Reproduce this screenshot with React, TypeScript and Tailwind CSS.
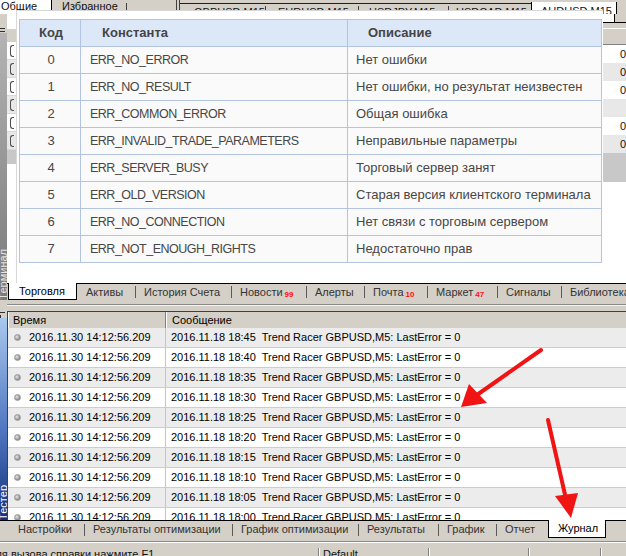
import React from "react";

const errorRows = [
  ["0", "ERR_NO_ERROR", "Нет ошибки"],
  ["1", "ERR_NO_RESULT", "Нет ошибки, но результат неизвестен"],
  ["2", "ERR_COMMON_ERROR", "Общая ошибка"],
  ["3", "ERR_INVALID_TRADE_PARAMETERS", "Неправильные параметры"],
  ["4", "ERR_SERVER_BUSY", "Торговый сервер занят"],
  ["5", "ERR_OLD_VERSION", "Старая версия клиентского терминала"],
  ["6", "ERR_NO_CONNECTION", "Нет связи с торговым сервером"],
  ["7", "ERR_NOT_ENOUGH_RIGHTS", "Недостаточно прав"],
  ["8", "ERR_TOO_FREQUENT_REQUESTS", "Слишком частые запросы"],
];

const journalTimes = ["18:45", "18:40", "18:35", "18:30", "18:25", "18:20", "18:15", "18:10", "18:05", "18:00"];

function Tab({ className, label, badge, sep = true }: { className: string; label: string; badge?: string; sep?: boolean }) {
  return (
    <div className={"flex items-center shrink-0 " + className}>
      <span className="flex-1 flex items-center whitespace-nowrap">
        {label}
        {badge && <span className="ml-[2px] self-end mb-[1px] text-[8px] leading-[8px] font-bold text-[#ff1010]">{badge}</span>}
      </span>
      {sep && <span className="w-px h-[12px] bg-[#5a5a5a] mr-[8px]" />}
    </div>
  );
}

function TopTabs() {
  return (
    <div className="flex h-[14px] shrink-0 leading-[13px] text-[#111]">
      <div className="w-[52px] bg-white border-r border-black pl-[1px]">Общие</div>
      <div className="flex w-[75px]">
        <span className="flex-1 pl-[10px]">Избранное</span>
        <span className="mt-[3px] h-[9px] w-px bg-[#404040]" />
      </div>
      <div className="w-[49px]" />
      <div className="w-px bg-[#404040]" />
      <div className="w-[2px]" />
      <div className="w-px bg-[#404040]" />
      <div className="flex w-[351px] border-t border-[#202020] mt-[3px] pt-[2px]">
        <div className="flex w-[85px]"><span className="flex-1 pl-[14px]">GBPUSD,M15</span><span className="h-[9px] w-px bg-[#404040]" /></div>
        <div className="flex w-[94px]"><span className="flex-1 pl-[13px]">EURUSD,M15</span><span className="h-[9px] w-px bg-[#404040]" /></div>
        <div className="flex w-[90px]"><span className="flex-1 pl-[10px]">USDJPY,M15</span><span className="h-[9px] w-px bg-[#404040]" /></div>
        <div className="flex-1 pl-[7px]">USDCAD,M15</div>
      </div>
      <div className="w-[86px] mt-[2px] bg-white border-l border-r border-black pl-[9px] pt-[3px]">AUDUSD,M15</div>
    </div>
  );
}

function SideBars() {
  return (
    <div className="flex flex-col w-[7px] shrink-0">
      <div className="h-[11px]" />
      <div className="h-[8px] flex flex-col gap-[2px] pt-[3px]">
        <div className="h-px w-[5px] bg-[#303030]" />
        <div className="h-px w-[5px] bg-[#303030]" />
      </div>
      <div className="h-[267px] flex flex-col justify-end overflow-hidden bg-[linear-gradient(180deg,#b4b4b4,#8a8a8a_70%,#7a7a7a)]">
        <span className="[writing-mode:vertical-rl] rotate-180 leading-[9px] text-[11px] text-[#e4e4e4] pb-[4px] -ml-[1px]">Терминал</span>
      </div>
      <div className="h-[10px]" />
      <div className="h-[8px] flex flex-col gap-[2px] pt-[2px]">
        <div className="h-px w-[5px] bg-[#303030]" />
        <div className="h-[3px] w-px bg-[#303030]" />
      </div>
      <div className="flex-1 flex flex-col justify-end overflow-hidden bg-[linear-gradient(180deg,#a9c8ee,#5077c0_55%,#12307a)]">
        <span className="[writing-mode:vertical-rl] rotate-180 leading-[9px] text-[11px] text-white pb-[2px] -ml-[1px]">Тестер</span>
      </div>
    </div>
  );
}

function LeftListRow({ grey }: { grey?: boolean }) {
  return (
    <div className={grey ? "h-[18px] bg-[#e8e8e8] border-b border-[#d8d8d8] flex items-center pl-[3px]" : "h-[18px] bg-white border-b border-[#d8d8d8] flex items-center pl-[3px]"}>
      <div className="w-[4px] h-[12px] border-l border-t border-b border-[#505050] rounded-l-[3px]" />
    </div>
  );
}

function RightListRow({ grey, value }: { grey?: boolean; value?: string }) {
  return (
    <div className={grey ? "h-[18px] bg-[#e8e8e8] flex items-center pl-[17px]" : "h-[18px] bg-white flex items-center pl-[17px]"}>
      {value}
    </div>
  );
}

function UpperArea() {
  return (
    <div className="flex h-[269px] bg-white">
      <div className="flex flex-col w-[9px]">
        <div className="h-[14px]" />
        <div className="h-[14px] bg-[#d4d0c8] border-t border-white" />
        <LeftListRow />
        <LeftListRow grey />
        <LeftListRow />
        <LeftListRow grey />
        <LeftListRow />
        <LeftListRow grey />
        <div className="h-[14px] bg-[#c8c8c8]" />
      </div>
      <div className="flex-1" />
      <div className="flex flex-col w-[23px] text-[#111]">
        <div className="flex h-[8px]">
          <div className="w-[11px] bg-white" />
          <div className="w-px bg-black" />
          <div className="flex-1 bg-[#d4d0c8]" />
        </div>
        <div className="h-[6px] bg-[#d4d0c8] border-t border-black" />
        <div className="h-[17px] bg-[#d4d0c8] border-t border-white border-b border-b-[#808080]" />
        <RightListRow value="0" />
        <RightListRow grey value="0" />
        <RightListRow value="0" />
        <RightListRow grey />
        <RightListRow value="0" />
        <RightListRow grey value="0" />
        <div className="h-[29px] bg-[#c8c8c8]" />
      </div>
    </div>
  );
}

function TerminalTabs() {
  return (
    <div className="flex h-[17px] text-[#333]">
      <div className="w-px border-t border-black" />
      <div className="w-[69px] bg-white border-l border-r border-b border-black pl-[10px] flex items-center text-black">Торговля</div>
      <div className="flex flex-1 border-t border-black pl-[9px] overflow-hidden">
        <Tab className="w-[58px]" label="Активы" />
        <Tab className="w-[96px]" label="История Счета" />
        <Tab className="w-[75px]" label="Новости" badge="99" />
        <Tab className="w-[58px]" label="Алерты" />
        <Tab className="w-[63px]" label="Почта" badge="10" />
        <Tab className="w-[70px]" label="Маркет" badge="47" />
        <Tab className="w-[64px]" label="Сигналы" />
        <Tab className="w-[70px]" label="Библиотека" sep={false} />
      </div>
    </div>
  );
}

function Journal() {
  return (
    <div className="flex flex-col h-[220px] text-black">
      <div className="h-[11px] flex flex-col">
        <div className="h-[4px]" />
        <div className="h-px bg-[#8a8a8a]" />
        <div className="h-px bg-[#f4f4f4]" />
      </div>
      <div className="flex flex-col flex-1 border-l border-[#404040] overflow-hidden">
        <div className="flex h-[17px] shrink-0 border-t border-[#404040] bg-[#d4d0c8]">
          <div className="w-[158px] border-r border-[#808080] border-l border-l-white pl-[4px] flex items-center">Время</div>
          <div className="flex-1 border-l border-white pl-[5px] flex items-center">Сообщение</div>
        </div>
        {journalTimes.map((t, i) => (
          <div key={t} className={i % 2 === 0 ? "flex h-[20px] shrink-0 bg-[#ececec] border-b border-[#cdcdcd]" : "flex h-[20px] shrink-0 bg-white border-b border-[#cdcdcd]"}>
            <div className="w-[158px] border-r border-[#c4c4c4] flex items-center pl-[6px]">
              <span className="w-[7px] h-[7px] rounded-full bg-[radial-gradient(circle_at_35%_35%,#e6e6e6,#8c8c8c_70%)] border border-[#9a9a9a]" />
              <span className="ml-[8px]">2016.11.30 14:12:56.209</span>
            </div>
            <div className="flex-1 flex items-center pl-[5px] whitespace-pre">{`2016.11.18 ${t}  Trend Racer GBPUSD,M5: LastError = 0`}</div>
          </div>
        ))}
      </div>
    </div>
  );
}

function TesterTabs() {
  return (
    <div className="flex h-[21px] shrink-0 text-[#333]">
      <div className="flex h-[18px] flex-1 border-t border-black pl-[18px]">
        <Tab className="w-[75px]" label="Настройки" />
        <Tab className="w-[148px]" label="Результаты оптимизации" />
        <Tab className="w-[126px]" label="График оптимизации" />
        <Tab className="w-[80px]" label="Результаты" />
        <Tab className="w-[58px]" label="График" />
        <Tab className="w-[43px]" label="Отчет" sep={false} />
      </div>
      <div className="w-[59px] h-[18px] bg-white border-l border-r border-b border-black pl-[9px] flex items-center text-black">Журнал</div>
      <div className="w-[20px] h-[18px] border-t border-black" />
    </div>
  );
}

function StatusBar() {
  return (
    <div className="flex h-[15px] shrink-0 border-t border-[#8a8a8a] overflow-hidden text-[#111]">
      <div className="flex flex-1 border-t border-white pt-[5px] leading-[13px]">
        <div className="w-[318px] overflow-hidden whitespace-nowrap"><span className="-ml-[12px] inline-block">Для вызова справки нажмите F1</span></div>
        <div className="w-px bg-[#808080]" />
        <div className="w-px bg-white" />
        <div className="w-[108px] pl-[3px]">Default</div>
        <div className="w-px bg-[#808080]" />
        <div className="w-px bg-white" />
        <div className="w-[98px]" />
        <div className="w-px bg-[#808080]" />
        <div className="w-px bg-white" />
        <div className="w-[70px]" />
        <div className="w-px bg-[#808080]" />
        <div className="w-px bg-white" />
      </div>
    </div>
  );
}

function ErrorPanel() {
  return (
    <div className="absolute left-[16px] top-[10px] w-[587px] h-[273px] bg-white border-l border-t border-[#d8d8d8] pl-[2px] pt-[8px] font-['Liberation_Sans',Arial,sans-serif] text-[13px] text-[#474747]">
      <div className="w-[583px] h-[244px] overflow-hidden border-l border-t border-[#b2c4df]">
        <div className="flex h-[27px] bg-[#dce8f7] border-b border-[#b2c4df] font-bold text-[13px] text-[#454545]">
          <div className="w-[61px] border-r border-[#b2c4df] flex items-center justify-center pl-[2px]">Код</div>
          <div className="w-[267px] border-r border-[#b2c4df] flex items-center pl-[21px]">Константа</div>
          <div className="w-[254px] border-r border-[#b2c4df] flex items-center pl-[20px]">Описание</div>
        </div>
        {errorRows.map(([code, name, desc]) => (
          <div key={code} className="flex h-[27px] bg-[#fafafa] border-b border-[#b2c4df]">
            <div className="w-[61px] border-r border-[#b2c4df] flex items-center justify-center pl-[2px]">{code}</div>
            <div className="w-[267px] border-r border-[#b2c4df] flex items-center pl-[9px] text-[12.5px] tracking-[-0.5px]">{name}</div>
            <div className="w-[254px] border-r border-[#b2c4df] flex items-center pl-[8px]">{desc}</div>
          </div>
        ))}
      </div>
    </div>
  );
}

function Arrows() {
  return (
    <svg className="absolute left-0 top-0 pointer-events-none" width="626" height="556" viewBox="0 0 626 556">
      <line x1="541" y1="350" x2="474" y2="397" stroke="#f01414" strokeWidth="4" strokeLinecap="round" />
      <polygon points="461,407 469,384 487,403" fill="#f01414" />
      <line x1="548" y1="420" x2="566" y2="499" stroke="#f01414" strokeWidth="4" strokeLinecap="round" />
      <polygon points="571,518 555,496 578,493" fill="#f01414" />
    </svg>
  );
}

export default function App() {
  return (
    <div className="relative flex flex-col w-[626px] h-[556px] overflow-hidden bg-[#d4d0c8] font-['Liberation_Sans',Arial,sans-serif] text-[11px]">
      <TopTabs />
      <div className="flex h-[506px] shrink-0">
        <SideBars />
        <div className="flex flex-col w-[619px]">
          <UpperArea />
          <TerminalTabs />
          <Journal />
        </div>
      </div>
      <TesterTabs />
      <StatusBar />
      <ErrorPanel />
      <Arrows />
    </div>
  );
}
